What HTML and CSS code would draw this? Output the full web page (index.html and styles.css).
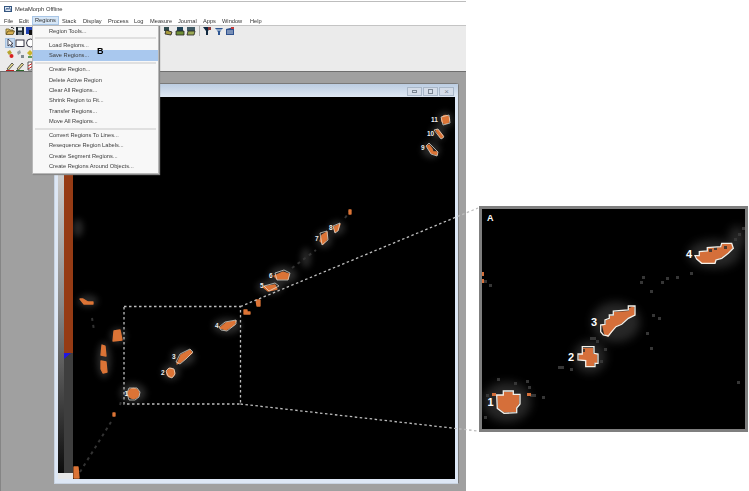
FILE: index.html
```html
<!DOCTYPE html>
<html lang="en">
<head>
<meta charset="utf-8">
<title>MetaMorph Offline</title>
<link rel="stylesheet" href="styles.css">
</head>
<body>
<div class="page">
  <div class="app">
    <div class="titlebar">
      <svg class="appicon" viewBox="0 0 8 6" width="8" height="6"><rect x=".5" y=".5" width="7" height="5" fill="#dfe8f4" stroke="#33557f"/><path d="M1.5 4.5 L3 2 L4 3.5 L5.5 1.5 L6.5 4.5" fill="none" stroke="#24467a" stroke-width=".8"/></svg>
      <span>MetaMorph Offline</span>
    </div>
    <nav class="menubar">
      <span class="m-file">File</span><span class="m-edit">Edit</span><span class="m-regions">Regions</span><span class="m-stack">Stack</span><span class="m-display">Display</span><span class="m-process">Process</span><span class="m-log">Log</span><span class="m-measure">Measure</span><span class="m-journal">Journal</span><span class="m-apps">Apps</span><span class="m-window">Window</span><span class="m-help">Help</span>
    </nav>
    <div class="toolbars">
      <div class="tbrow">
        <svg class="ic" viewBox="0 0 10 10"><path d="M1 8 L1 3 L4 3 L5 4 L8 4 L8 5" fill="#e3c36a" stroke="#6b5a20" stroke-width=".8"/><path d="M1 8.500 L3 5 L9.500 5 L8 8.500Z" fill="#d8b050" stroke="#5f4d18" stroke-width=".8"/><path d="M6 1.500 Q8 .5 9 3" fill="none" stroke="#222"/></svg>
        <svg class="ic" viewBox="0 0 10 10"><rect x="1" y="1" width="8" height="8" fill="#1f2a33"/><rect x="3" y="1.500" width="4" height="3" fill="#e8eef2"/><rect x="3" y="6" width="4" height="3" fill="#77838c"/></svg>
        <svg class="ic" viewBox="0 0 10 10"><rect x="1" y="1" width="8" height="7" fill="#1c3fb0"/><path d="M4 4 L9 4 L9 9 L4 9Z" fill="#111"/></svg>
        <div class="tbgroup">
          <svg class="ic" viewBox="0 0 10 10"><path d="M1 1 L6 1 L6 5 L1 5Z" fill="#2f4a4c"/><path d="M3 4 L9 6 L8 9 L2 8Z" fill="#a89a3c" stroke="#222" stroke-width=".8"/></svg>
          <svg class="ic" viewBox="0 0 10 10"><path d="M2 1 L8 1 L8 5 L2 5Z" fill="#1f4257"/><path d="M1 5 L9 5 L9 9 L1 9Z" fill="#6f8f36" stroke="#222" stroke-width=".8"/></svg>
          <svg class="ic" viewBox="0 0 10 10"><path d="M1 1 L9 1 L9 5 L1 5Z" fill="#3f5a64"/><path d="M2 5 L9 5 L8 9 L1 9Z" fill="#9aa854" stroke="#222" stroke-width=".8"/></svg>
          <i class="tbsep"></i>
          <svg class="ic" viewBox="0 0 10 10"><path d="M1 1 L9 1 L6 5 L6 9 L4 9 L4 5Z" fill="#10283f"/><path d="M6 1 L9 1 L9 4 L6 4Z" fill="#8e3a3a"/></svg>
          <svg class="ic" viewBox="0 0 10 10"><path d="M1 2 L9 2 L6 6 L6 9 L4 9 L4 6Z" fill="#2c5592"/><path d="M2 4 L8 4" stroke="#e8eef2"/></svg>
          <svg class="ic" viewBox="0 0 10 10"><path d="M1 3 L9 1 L9 9 L1 9Z" fill="#2f528f"/><path d="M2 5 L8 5 M2 7 L8 7" stroke="#e8eef2" stroke-width=".8"/><path d="M6 1 L9 1 L9 3 L6 3Z" fill="#c23b3b"/></svg>
        </div>
      </div>
      <div class="tbrow">
        <span class="tbsel"><svg class="ic" viewBox="0 0 10 10"><path d="M3 1 L3 8 L5 6.500 L6.500 9 L7.500 8.500 L6.200 6 L8 5.500Z" fill="#fff" stroke="#223" stroke-width=".8"/></svg></span>
        <svg class="ic" viewBox="0 0 10 10"><rect x="1" y="2" width="8" height="6.500" fill="#fff" stroke="#223" stroke-width=".9"/></svg>
        <svg class="ic" viewBox="0 0 10 10"><circle cx="5.500" cy="5" r="4" fill="#fff" stroke="#223" stroke-width=".9"/></svg>
      </div>
      <div class="tbrow">
        <svg class="ic" viewBox="0 0 10 10"><path d="M2 3 L5 1 L7 4 L4 6Z" fill="#b7a42e"/><circle cx="6.500" cy="7" r="2" fill="#d81f1f"/></svg>
        <svg class="ic" viewBox="0 0 10 10"><path d="M2 3 L5 1 L6 4 L3 6Z" fill="#9aa2a6"/><path d="M6 6 L9 6 L9 9 L6 9Z" fill="#7f8a90"/></svg>
        <svg class="ic" viewBox="0 0 10 10"><path d="M2 4 L5 1 L8 4 L5 7Z" fill="#c9b42a"/><path d="M3 8 L7 8" stroke="#2e7d32" stroke-width="1.500"/></svg>
      </div>
      <div class="tbrow">
        <svg class="ic" viewBox="0 0 10 10"><path d="M2 8 L7 2 L8.500 3.500 L3.500 9Z" fill="#e9dd90" stroke="#333" stroke-width=".8"/><path d="M1 9.500 L9 9.500" stroke="#c02020"/></svg>
        <svg class="ic" viewBox="0 0 10 10"><path d="M2 8 L7 2 L8.500 3.500 L3.500 9Z" fill="#e9dd90" stroke="#333" stroke-width=".8"/><path d="M1 9.500 L9 9.500" stroke="#2d6a2d"/></svg>
        <svg class="ic" viewBox="0 0 10 10"><path d="M3 1 L7 1 L7 9 L3 9Z" fill="#fff" stroke="#333" stroke-width=".8"/><path d="M3 5 L8 2 M3 8 L8 5" stroke="#c02020"/></svg>
      </div>
    </div>
    <div class="workspace">
      <section class="child">
        <div class="childtitle">
          <span class="wbtn"><i class="g-min"></i></span>
          <span class="wbtn"><i class="g-max"></i></span>
          <span class="wbtn"><i class="g-close">×</i></span>
        </div>
        <div class="childbody">
          <div class="scale">
            <div class="ramp"></div>
            <div class="lut"><div class="lut-hi"></div><div class="lut-lo"></div></div>
            <div class="scale-end"></div>
          </div>
          <svg class="micro" viewBox="73 97 382 382" width="382" height="382">
            <g class="glow">
              <ellipse cx="133" cy="393" rx="13" ry="10"/><ellipse cx="171" cy="372" rx="9" ry="8"/><ellipse cx="183" cy="357" rx="12" ry="9"/><ellipse cx="227" cy="326" rx="14" ry="8"/><ellipse cx="270" cy="287" rx="13" ry="7"/><ellipse cx="283" cy="275" rx="14" ry="9"/><ellipse cx="324" cy="239" rx="8" ry="9"/><ellipse cx="337" cy="228" rx="8" ry="7"/><ellipse cx="445" cy="120" rx="8" ry="8"/><ellipse cx="438" cy="133" rx="7" ry="7"/><ellipse cx="431" cy="150" rx="9" ry="8"/><ellipse cx="118" cy="336" rx="8" ry="8"/><ellipse cx="104" cy="360" rx="7" ry="18"/><ellipse cx="88" cy="301" rx="10" ry="6"/><ellipse cx="78" cy="228" rx="5" ry="9"/><ellipse cx="306" cy="258" rx="5" ry="10"/>
            </g>
            <path class="trail" d="M80 472 L111 422 M120 405 L122 398 M92 318 L94 330 M292 268 L316 250 M345 218 L352 208"/>
            <g class="cell">
              <ellipse cx="133.500" cy="393.500" rx="5.500" ry="5"/><ellipse cx="170.700" cy="372.700" rx="4" ry="4.500"/>
              <path d="M177 364 L181 355 L190 350 L192 353 L186 358 L181 362Z"/>
              <path d="M220 328 L226 323 L236 321 L234 325 L226 330Z"/>
              <path d="M263 287 L275 285 L277 289 L268 291Z M274 276 L283 272 L289 274 L288 279 L277 279Z"/>
              <path d="M322 235 L327 232 L327 239 L323 244 L320 241Z M334 227 L340 224 L338 230 L335 232Z"/>
              <path d="M349 210 h2 v4 h-2Z M256 300 h4 v6 h-3Z M244 310 h3 v2 h3 v2 h-6Z"/>
              <ellipse cx="445.500" cy="119.500" rx="4" ry="4"/>
              <path d="M436 130 L438 130 L443 136 L442 138 L440 137Z M427 146 L429 145 L432 149 L433 152 L437 152 L437 155 L431 153Z"/>
              <path d="M114 331 L120 330 L122 340 L113 341Z M102 345 L105 346 L106 356 L101 355Z M101 361 L106 362 L107 372 L103 373 L101 369Z M80 299 L83 299 L88 302 L93 302 L93 304 L84 304Z M113 413 h2 v3 h-2Z M74 467 L78 467 L79 478 L74 478Z"/>
            </g>
            <g class="outline">
              <path d="M127 393 L129 388 L137 388 L140 392 L139 397 L135 400 L129 400Z"/>
              <path d="M166 371 L169 368 L174 369 L175 374 L172 378 L168 376Z"/>
              <path d="M176 362 L180 354 L190 349 L193 352 L186 359 L180 364Z"/>
              <path d="M219 327 L225 322 L236 320 L236 324 L227 331 L221 330Z"/>
              <path d="M264 286 L275 283 L279 286 L269 291Z"/>
              <path d="M275 273 L284 270 L290 273 L288 280 L277 280Z"/>
              <path d="M320 233 L327 231 L328 240 L322 245Z"/>
              <path d="M333 226 L340 223 L338 231 L335 233Z"/>
              <path d="M441 117 L449 115 L450 123 L443 125Z"/>
              <path d="M434 130 L438 129 L444 137 L441 139Z"/>
              <path d="M426 146 L429 143 L438 152 L437 156 L431 154Z"/>
            </g>
            <g class="nums">
              <text x="124.500" y="396">1</text><text x="161" y="375">2</text><text x="172" y="359">3</text><text x="215" y="328">4</text><text x="260" y="288">5</text><text x="269" y="278">6</text><text x="315" y="241">7</text><text x="329" y="230">8</text><text x="421" y="150">9</text><text x="427" y="136">10</text><text x="431" y="122">11</text>
            </g>
          </svg>
        </div>
      </section>
    </div>
    <div class="menu">
      <div class="mi">Region Tools...</div>
      <div class="msep"></div>
      <div class="mi">Load Regions...</div>
      <div class="mi sel">Save Regions...</div>
      <div class="msep"></div>
      <div class="mi">Create Region...</div>
      <div class="mi">Delete Active Region</div>
      <div class="mi">Clear All Regions...</div>
      <div class="mi">Shrink Region to Fit...</div>
      <div class="mi">Transfer Regions...</div>
      <div class="mi">Move All Regions...</div>
      <div class="msep"></div>
      <div class="mi">Convert Regions To Lines...</div>
      <div class="mi">Resequence Region Labels...</div>
      <div class="mi">Create Segment Regions...</div>
      <div class="mi">Create Regions Around Objects...</div>
      <b class="callout">B</b>
    </div>
  </div>
  <figure class="inset">
    <svg class="inset-img" viewBox="482 209 263 220" width="263" height="220">
      <g class="glow2">
        <ellipse cx="507" cy="402" rx="24" ry="20"/><ellipse cx="590" cy="357" rx="16" ry="16"/><ellipse cx="616" cy="322" rx="24" ry="20"/><ellipse cx="714" cy="254" rx="26" ry="14"/><ellipse cx="737" cy="238" rx="8" ry="12"/>
      </g>
      <g class="pix">
        <rect x="526" y="380" width="3" height="3"/><rect x="514" y="382" width="3" height="3"/><rect x="528" y="386" width="3" height="3"/><rect x="497" y="378" width="3" height="3"/><rect x="486" y="394" width="3" height="3"/><rect x="484" y="416" width="3" height="3"/><rect x="530" y="394" width="6" height="3"/><rect x="542" y="396" width="3" height="3"/><rect x="558" y="366" width="6" height="3"/><rect x="570" y="368" width="3" height="3"/><rect x="600" y="360" width="3" height="3"/><rect x="604" y="348" width="3" height="3"/><rect x="650" y="347" width="3" height="3"/><rect x="652" y="314" width="3" height="3"/><rect x="646" y="332" width="3" height="3"/><rect x="658" y="317" width="3" height="3"/><rect x="590" y="337" width="6" height="3"/><rect x="596" y="340" width="3" height="3"/><rect x="642" y="276" width="3" height="3"/><rect x="661" y="281" width="3" height="3"/><rect x="666" y="277" width="3" height="3"/><rect x="676" y="276" width="3" height="3"/><rect x="690" y="272" width="3" height="3"/><rect x="738" y="233" width="3" height="3"/><rect x="734" y="238" width="3" height="3"/><rect x="742" y="227" width="3" height="3"/><rect x="484" y="280" width="3" height="3"/><rect x="489" y="284" width="3" height="3"/><rect x="737" y="381" width="3" height="3"/><rect x="640" y="281" width="3" height="3"/><rect x="650" y="290" width="3" height="3"/></g>
      <g class="orange">
        <path d="M497 395 L503 395 L503 392 L513 392 L513 395 L519 395 L519 404 L516 408 L516 412 L504 412.500 L498 408Z"/>
        <path d="M579 354 L583 354 L583 348 L593 348 L593 354 L597 354 L597 363 L594 363 L594 366 L586 366 L586 360 L579 360Z"/>
        <path d="M602 325 L606 324 L606 320 L610 319 L610 316 L614 316 L614 312 L629 311 L629 308 L634 306 L635 315 L628 318 L621 324 L616 326.500 L612 332 L608 337 L604 334Z"/>
        <path d="M696 255 L700 256 L700 252 L708 251 L708 248 L721 247 L722 244 L732 244 L733 248 L728 253 L721 258 L716 260 L715 264 L702 264 L697 259Z"/>
        <rect x="527" y="393" width="4" height="3"/><rect x="482" y="272" width="2" height="4"/><rect x="482" y="279" width="2" height="4"/><rect x="492" y="393" width="4" height="3"/>
      </g>
      <g class="darkpix"><rect x="714" y="247" width="3" height="3"/><rect x="709" y="249" width="3" height="3"/><rect x="724" y="246" width="3" height="3"/><rect x="582" y="349" width="3" height="3"/></g>
      <g class="outline2">
        <path d="M496.700 395 L503.300 395 V391 H513.300 V394.300 H520 V404 L516.700 408 V412.700 L504 413.300 L497.300 408.300Z"/>
        <path d="M578 354 H582.300 V346.700 H594 V353.300 L598 354 V363.300 H595 V366.700 H585.700 V360.700 L578 360Z"/>
        <path d="M600.700 325 L605 324.300 V320 L609.300 318.300 V315 H613.300 V311 L628.300 310 V306 H635 V315 L628.300 318.300 L621.700 324.300 L616 326.700 L611.700 331.700 L608.300 336 L603.300 335 L600.700 331.700Z"/>
        <path d="M695 255.700 H699.300 V251.700 L707.300 251 V247.700 L720.700 246.700 L721.700 243.300 H731.700 L733.300 248.300 L728.300 253.300 L721.700 258.300 L716 260 L715 263.300 H701.700 L696.700 259Z"/>
      </g>
      <g class="bignums">
        <text x="487.500" y="406">1</text><text x="568" y="361">2</text><text x="591" y="326">3</text><text x="686" y="258">4</text>
      </g>
      <text class="inset-a" x="487" y="221">A</text>
    </svg>
  </figure>
</div>
<svg class="zoomlines" viewBox="0 0 749 491" width="749" height="491" aria-hidden="true">
  <rect x="124" y="306.500" width="116.500" height="97.500"/>
  <path d="M240.500 306.500 L478 208 M240.500 404 L478 431"/>
</svg>
</body>
</html>
```

FILE: styles.css
```css
* { box-sizing: border-box; }
html, body { margin: 0; padding: 0; background: #fff; }
body {
  width: 749px;
  height: 491px;
  overflow: hidden;
  position: relative;
  font-family: "Liberation Sans", Arial, sans-serif;
  color: #333;
}
.page { display: flex; height: 491px; filter: blur(0.3px); }
.app { position: relative; width: 466px; height: 491px; display: flex; flex-direction: column; flex: none; }

.titlebar {
  height: 15px;
  border-top: 1px solid #bdbdbd;
  margin-top: 1px;
  padding: 0 0 0 4px;
  display: flex;
  align-items: center;
  gap: 3px;
  font-size: 5.800px;
  background: #fff;
}
.appicon { flex: none; }

.menubar {
  display: flex;
  font-size: 5.700px;
  background: #fff;
  padding-left: 4px;
  height: 9px;
  align-items: center;
}
.menubar span { flex: none; }
.m-file { width: 15px; }
.m-edit { width: 13px; }
.m-regions {
  width: 27px;
  padding-left: 3px;
  background: #d6e6f6;
  box-shadow: inset 0 0 0 1px #a9c6e6;
  height: 9px;
  line-height: 9px;
}
.m-stack { width: 24px; padding-left: 3px; }
.m-display { width: 25px; }
.m-process { width: 26px; }
.m-log { width: 16px; }
.m-measure { width: 28px; }
.m-journal { width: 25px; }
.m-apps { width: 19px; }
.m-window { width: 28px; }

.toolbars {
  height: 47px;
  background: #ebebeb;
  border-top: 1px solid #c4c4c4;
  border-bottom: 1px solid #6e6e6e;
  display: flex;
  flex-direction: column;
  padding: 0 0 0 5px;
  gap: 0.500px;
}
.tbrow { height: 11px; display: flex; align-items: center; gap: 0; }
.ic { width: 10px; height: 10px; flex: none; }
.tbgroup {
  margin-left: 128px;
  display: flex;
  align-items: center;
  gap: 1.500px;
}
.tbsep { width: 1px; height: 10px; background: #b2b2b2; margin: 0 1px; }
.tbsel { display: flex; background: #c5d9ef; box-shadow: inset 0 0 0 1px #a6c3e2; }

.workspace {
  flex: 1;
  min-height: 0;
  background: #a0a0a0;
  border-left: 1px solid #858585;
  padding: 11px 7px 7px 53px;
}
.child {
  height: 401px;
  background: #dde7f5;
  border: 1px solid #7a7a7a;
  border-radius: 2px 3px 0 0;
  border-bottom-color: #c9d4e2;
  border-left-color: #c9d4e2;
  padding: 0 3px 4px 3px;
  display: flex;
  flex-direction: column;
}
.childtitle {
  height: 13px;
  flex: none;
  margin: 0 -3px;
  padding: 3px 4px 1px 0;
  background: linear-gradient(#bccde2, #dfe8f3);
  display: flex;
  justify-content: flex-end;
  gap: 1px;
}
.wbtn {
  width: 15px;
  height: 9px;
  background: #d4dce8;
  box-shadow: inset 0 0 0 1px #a9b7c8;
  display: flex;
  align-items: center;
  justify-content: center;
}
.wbtn i { display: block; font-style: normal; }
.g-min { width: 5px; height: 3px; border: 1px solid #7c8794; }
.g-max { width: 5px; height: 5px; border: 1px solid #7c8794; }
.g-close { font-size: 8px; line-height: 8px; color: #7c8794; }

.childbody { display: flex; flex: 1; min-height: 0; background: #000; }
.scale { width: 15px; flex: none; display: grid; grid-template-columns: 6px 9px; grid-template-rows: 376px 6px; }
.ramp { background: linear-gradient(#f4f4f4, #8a8a8a 55%, #0c0c0c); }
.lut { display: flex; flex-direction: column; position: relative; }
.lut-hi { height: 256px; background: #963b14; }
.lut-lo { flex: 1; background: #3e3e3e; }
.lut-lo::before {
  content: "";
  display: block;
  width: 0;
  height: 0;
  border-top: 6px solid #2216e0;
  border-right: 7px solid transparent;
}
.scale-end { grid-column: 1 / 3; background: #e6e6e6; }
.micro { display: block; flex: none; background: #000; }
.glow { fill: #444; filter: blur(3px); opacity: .6; }
.trail { fill: none; stroke: #333; stroke-width: 2; stroke-dasharray: 3 4; filter: blur(.6px); }
.cell { fill: #dc7436; stroke: #dc7436; stroke-width: 1.300; stroke-linejoin: round; }
.outline { fill: none; stroke: #e6e6de; stroke-width: .7; }
.nums text { font-size: 6.500px; font-weight: 700; fill: #eee; font-family: "Liberation Sans", Arial, sans-serif; }

.menu {
  position: absolute;
  left: 32px;
  top: 25px;
  width: 127px;
  height: 149px;
  background: #f8f8f8;
  border: 1px solid #b8b8b8;
  box-shadow: 1px 1px 1px #888;
  padding: 0 1px;
  font-size: 5.700px;
  color: #3c3c3c;
}
.mi { height: 10.400px; line-height: 10.400px; padding-left: 15px; white-space: nowrap; }
.mi.sel { background: #a9c8ee; margin: 0 -1px; padding-left: 16px; }
.msep { height: 3.500px; margin: 0 1px; border-top: 1px solid #c8c8c8; transform: translateY(1.500px); }
.callout {
  position: absolute;
  left: 64px;
  top: 20px;
  font-size: 9px;
  line-height: 10px;
  color: #000;
}

.inset {
  margin: 206px 0 0 13px;
  width: 269px;
  height: 226px;
  border: 3px solid #7f7f7f;
  flex: none;
  background: #000;
}
.inset-img { display: block; }
.glow2 { fill: #383838; filter: blur(5px); opacity: .7; }
.pix { fill: #363636; }
.orange { fill: #d56f3a; }
.darkpix { fill: #4a3a30; }
.outline2 { fill: none; stroke: #f4f1ea; stroke-width: 1.300; }
.bignums text { font-size: 11px; font-weight: 700; fill: #fff; font-family: "Liberation Sans", Arial, sans-serif; }
.inset-a { font-size: 9px; font-weight: 700; fill: #fff; font-family: "Liberation Sans", Arial, sans-serif; }

.zoomlines {
  position: absolute;
  left: 0;
  top: 0;
  fill: none;
  stroke: #bdbdbd;
  stroke-width: 1.300;
  stroke-dasharray: 2.500 2.500;
  pointer-events: none;
}
```
